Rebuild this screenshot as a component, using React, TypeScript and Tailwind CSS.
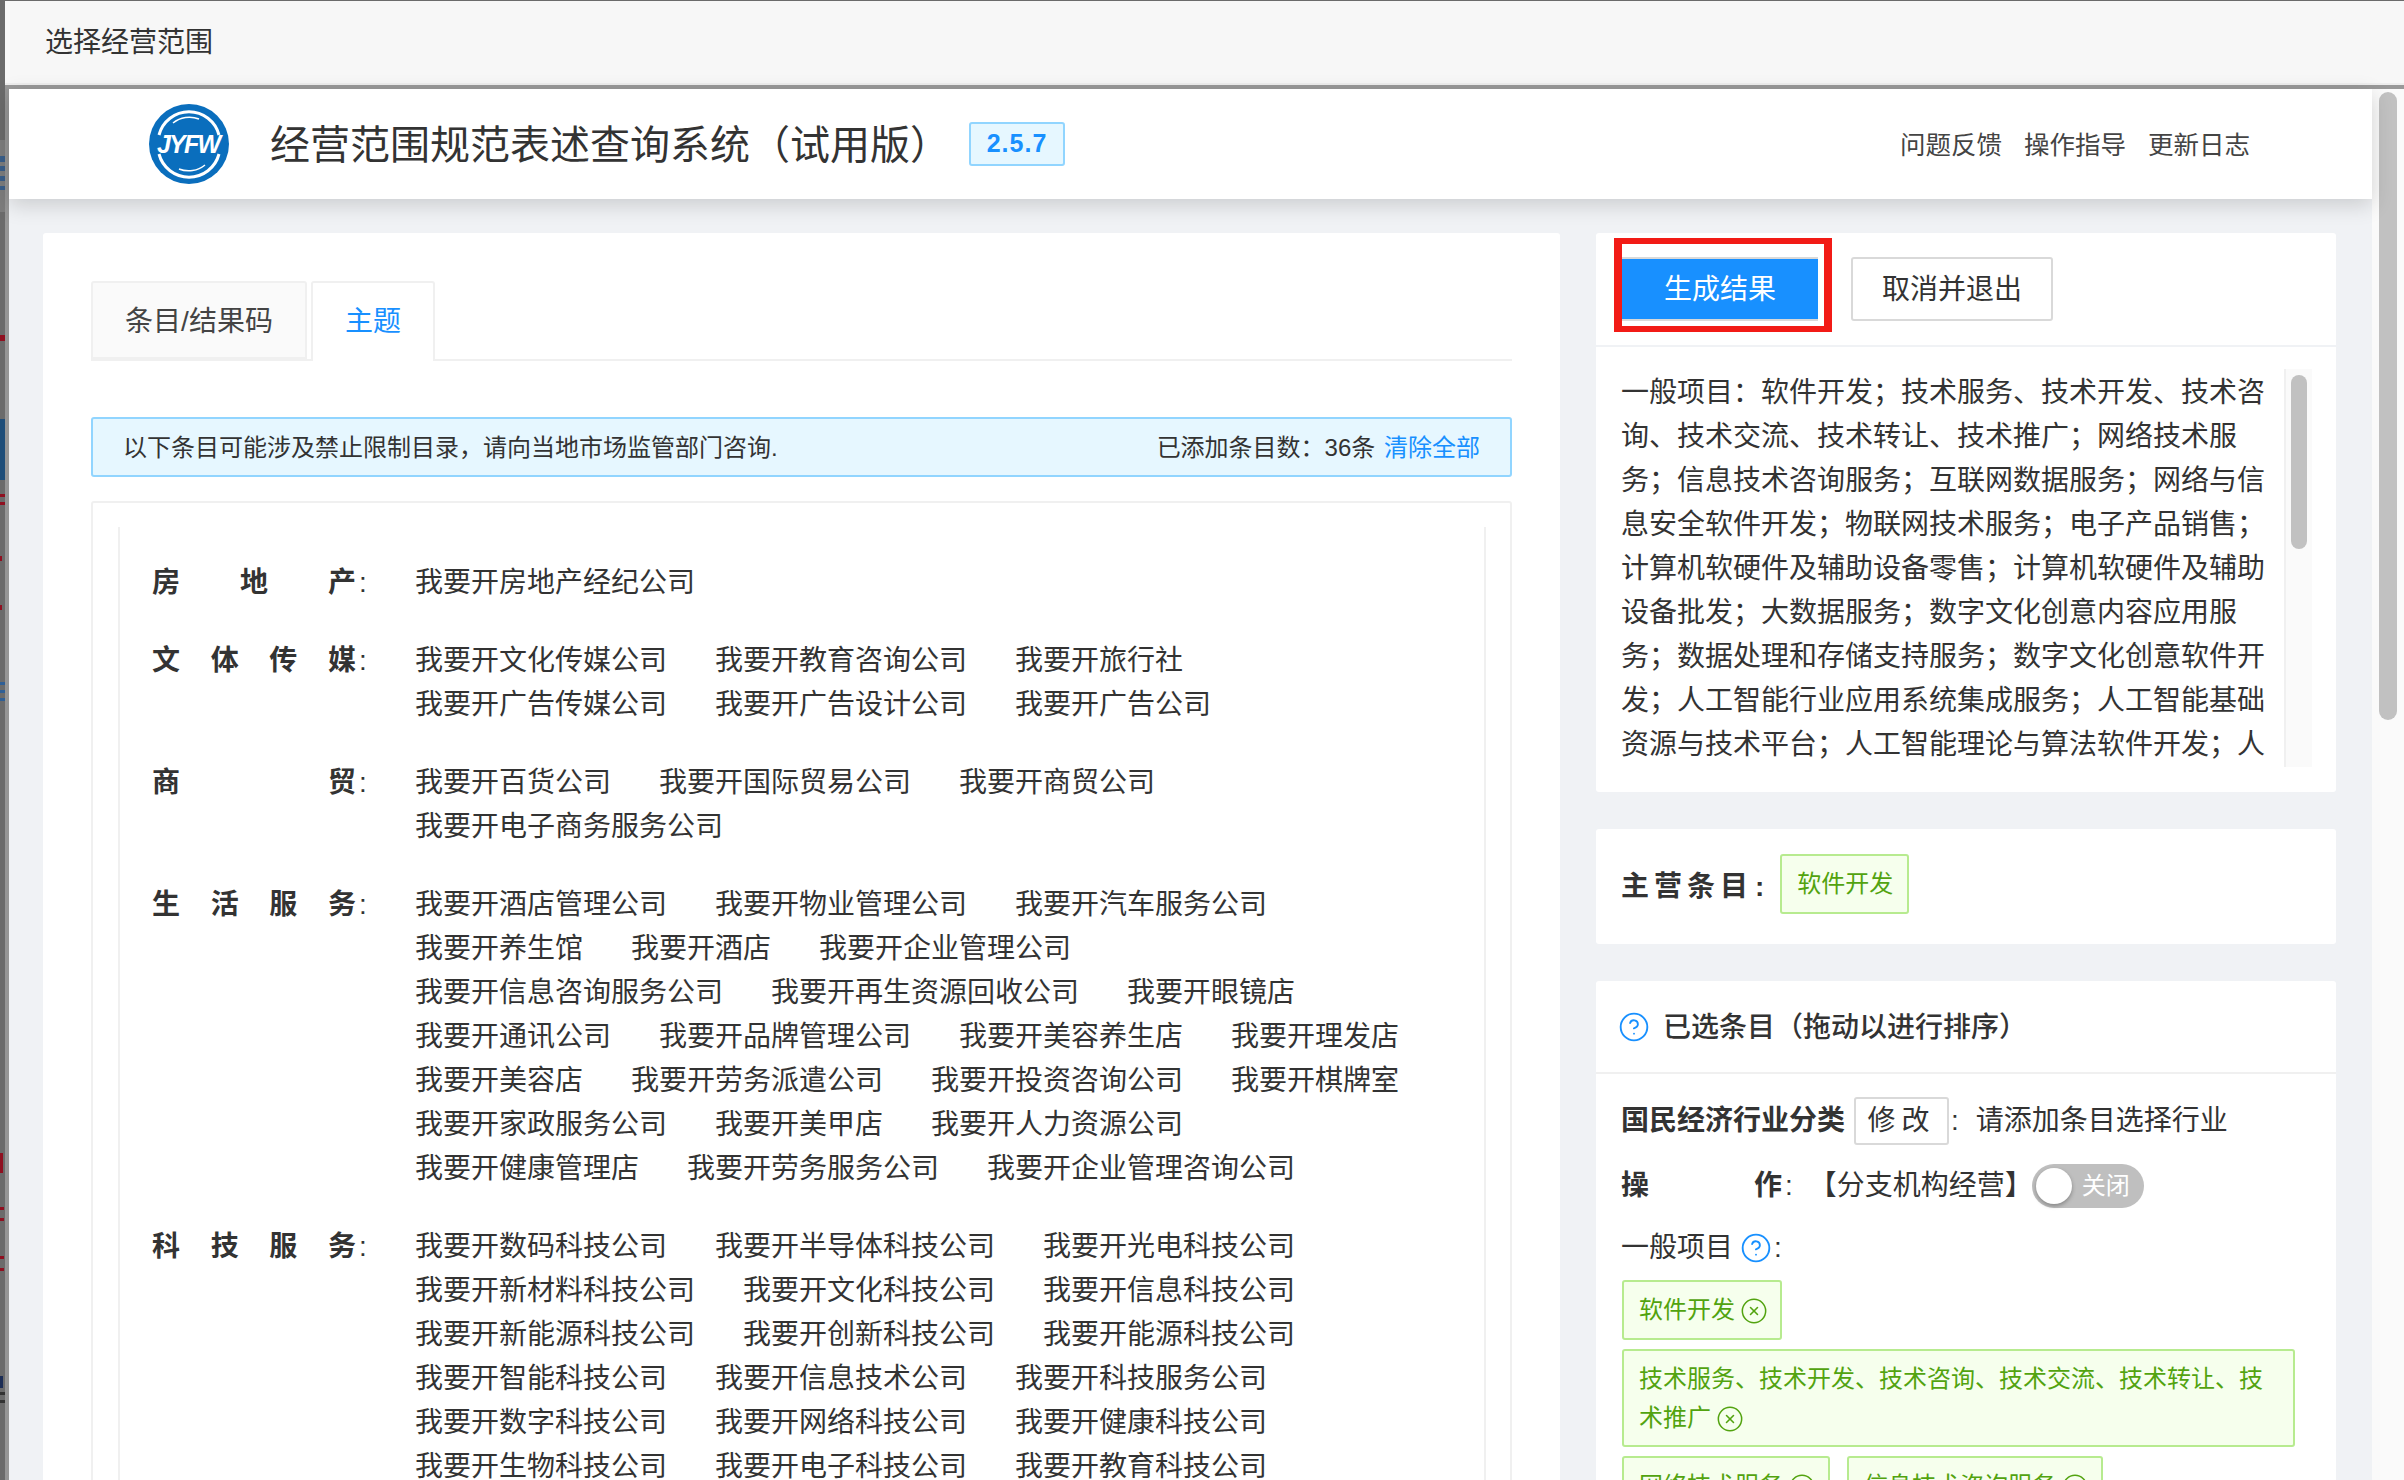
import { CircleHelp, CircleX } from "lucide-react";

const groups: { label: string; lines: string[][] }[] = [
  { label: "房地产", lines: [["房地产经纪公司"]] },
  {
    label: "文体传媒",
    lines: [
      ["文化传媒公司", "教育咨询公司", "旅行社"],
      ["广告传媒公司", "广告设计公司", "广告公司"],
    ],
  },
  {
    label: "商贸",
    lines: [["百货公司", "国际贸易公司", "商贸公司"], ["电子商务服务公司"]],
  },
  {
    label: "生活服务",
    lines: [
      ["酒店管理公司", "物业管理公司", "汽车服务公司"],
      ["养生馆", "酒店", "企业管理公司"],
      ["信息咨询服务公司", "再生资源回收公司", "眼镜店"],
      ["通讯公司", "品牌管理公司", "美容养生店", "理发店"],
      ["美容店", "劳务派遣公司", "投资咨询公司", "棋牌室"],
      ["家政服务公司", "美甲店", "人力资源公司"],
      ["健康管理店", "劳务服务公司", "企业管理咨询公司"],
    ],
  },
  {
    label: "科技服务",
    lines: [
      ["数码科技公司", "半导体科技公司", "光电科技公司"],
      ["新材料科技公司", "文化科技公司", "信息科技公司"],
      ["新能源科技公司", "创新科技公司", "能源科技公司"],
      ["智能科技公司", "信息技术公司", "科技服务公司"],
      ["数字科技公司", "网络科技公司", "健康科技公司"],
      ["生物科技公司", "电子科技公司", "教育科技公司"],
    ],
  },
];

const resultText =
  "一般项目：软件开发；技术服务、技术开发、技术咨询、技术交流、技术转让、技术推广；网络技术服务；信息技术咨询服务；互联网数据服务；网络与信息安全软件开发；物联网技术服务；电子产品销售；计算机软硬件及辅助设备零售；计算机软硬件及辅助设备批发；大数据服务；数字文化创意内容应用服务；数据处理和存储支持服务；数字文化创意软件开发；人工智能行业应用系统集成服务；人工智能基础资源与技术平台；人工智能理论与算法软件开发；人工智能公共数据平台；软件销售；";

// bits of the dimmed page that peek out left of the modal
const specks: { y: number; h: number; w: number; color: string }[] = [
  { y: 140, h: 72, w: 5, color: "#7d7d7d" },
  { y: 156, h: 6, w: 5, color: "#3a5f8a" },
  { y: 166, h: 5, w: 5, color: "#3a5f8a" },
  { y: 176, h: 5, w: 5, color: "#3a5f8a" },
  { y: 186, h: 4, w: 5, color: "#3a5f8a" },
  { y: 335, h: 6, w: 5, color: "#8f1020" },
  { y: 419, h: 61, w: 5, color: "#1f4e79" },
  { y: 494, h: 3, w: 5, color: "#8f1020" },
  { y: 502, h: 3, w: 5, color: "#8f1020" },
  { y: 556, h: 5, w: 2, color: "#8f1020" },
  { y: 605, h: 5, w: 2, color: "#8f1020" },
  { y: 682, h: 3, w: 5, color: "#2f5f95" },
  { y: 690, h: 3, w: 5, color: "#2f5f95" },
  { y: 698, h: 3, w: 5, color: "#2f5f95" },
  { y: 1153, h: 20, w: 3, color: "#8f1020" },
  { y: 1207, h: 3, w: 4, color: "#8f1020" },
  { y: 1218, h: 3, w: 4, color: "#8f1020" },
  { y: 1256, h: 3, w: 4, color: "#8f1020" },
  { y: 1268, h: 3, w: 4, color: "#8f1020" },
  { y: 1376, h: 12, w: 3, color: "#1c2d55" },
  { y: 1392, h: 3, w: 5, color: "#333333" },
  { y: 1400, h: 3, w: 5, color: "#333333" },
];

function Logo() {
  return (
    <svg width="80" height="80" viewBox="0 0 80 80" className="shrink-0">
      <circle cx="40" cy="40" r="40" fill="#0a6ebd" />
      <path d="M10 31 A31 31 0 0 1 70 31" fill="none" stroke="#fff" strokeWidth="3" />
      <path d="M10 50 A31 31 0 0 0 70 50" fill="none" stroke="#fff" strokeWidth="3" />
      <path d="M24 19 A26 26 0 0 1 50 15" fill="none" stroke="#fff" strokeWidth="1.5" />
      <path d="M30 65 A26 26 0 0 0 56 61" fill="none" stroke="#fff" strokeWidth="1.5" />
      <text
        x="40"
        y="49"
        textAnchor="middle"
        fill="#fff"
        fontSize="25"
        fontWeight="700"
        fontStyle="italic"
        fontFamily="Liberation Sans, sans-serif"
        textLength="64"
      >
        JYFW
      </text>
    </svg>
  );
}

function Tag({ text, close = true, leading = "leading-[40px]" }: { text: string; close?: boolean; leading?: string }) {
  return (
    <div className={`w-fit rounded-[3px] border-2 border-[#b7eb8f] bg-[#f6ffed] py-[8px] pl-[15px] pr-[14px] text-[24px] text-[#52a30f] ${leading}`}>
      {text}
      {close && <CircleX size={28} strokeWidth={1.3} className="-mr-[2px] ml-[5px] inline-block align-[-7px]" />}
    </div>
  );
}

function GroupRow({ label, lines }: { label: string; lines: string[][] }) {
  return (
    <div className="mb-[34px] flex text-[28px] leading-[44px] text-[#333]">
      <div className="flex w-[263px] shrink-0">
        <span className="w-[204px] font-semibold [text-align-last:justify]">{label}</span>
        <span className="ml-[3px]">:</span>
      </div>
      <div>
        {lines.map((line, i) => (
          <div key={i} className="flex gap-[48px] whitespace-nowrap">
            {line.map((name) => (
              <span key={name}>我要开{name}</span>
            ))}
          </div>
        ))}
      </div>
    </div>
  );
}

export default function App() {
  return (
    <div
      lang="zh-CN"
      className="relative flex h-[1480px] w-[2404px] flex-col overflow-hidden bg-[#6b6b6b] pl-[5px] pt-[1px] font-['Liberation_Sans','Noto_Sans_CJK_SC',sans-serif] text-[#333]"
    >
      {specks.map((s) => (
        <div
          key={s.y}
          className="absolute left-0"
          style={{ top: s.y, height: s.h, width: s.w, backgroundColor: s.color }}
        />
      ))}

      {/* modal title */}
      <div className="flex h-[84px] shrink-0 items-center border-b-2 border-[#eeeeee] bg-[#f7f7f7] pl-[40px] pt-[2px] text-[28px] text-[#333]">
        选择经营范围
      </div>
      <div className="h-[4px] shrink-0 bg-[#999999]" />

      <div className="flex min-h-0 flex-1 bg-[#969696] pl-[4px]">
        <div className="flex w-[2363px] shrink-0 flex-col bg-[#f0f2f5]">
          {/* app header */}
          <header className="relative flex h-[110px] shrink-0 items-center bg-white pl-[140px] pr-[122px] shadow-[0_6px_20px_rgba(0,0,0,0.16)]">
            <Logo />
            <h1 className="ml-[41px] whitespace-nowrap pt-[2px] text-[40px] font-normal text-[#333]">
              经营范围规范表述查询系统（试用版）
            </h1>
            <span className="ml-[19px] flex h-[44px] w-[96px] items-center justify-center rounded-[3px] border-2 border-[#91d5ff] bg-[#e6f7ff] text-[25px] font-bold tracking-[1px] text-[#1890ff]">
              2.5.7
            </span>
            <nav className="ml-auto flex gap-[22px] pt-[2px] text-[25.5px] text-[#444]">
              <span>问题反馈</span>
              <span>操作指导</span>
              <span>更新日志</span>
            </nav>
          </header>

          <div className="flex min-h-0 flex-1 gap-[36px] pl-[34px] pt-[34px]">
            {/* left card */}
            <section className="w-[1517px] shrink-0 rounded-t-[3px] bg-white px-[48px] pt-[48px]">
              <div className="flex h-[80px] items-start gap-[4px] border-b-2 border-[#f0f0f0] text-[28px]">
                <div className="flex h-[78px] w-[216px] items-center justify-center rounded-t-[3px] border-2 border-[#f0f0f0] bg-[#fafafa] pt-[3px] text-[#444]">
                  条目/结果码
                </div>
                <div className="flex h-[80px] w-[124px] items-center justify-center rounded-t-[3px] border-2 border-b-0 border-[#f0f0f0] bg-white text-[#1890ff]">
                  主题
                </div>
              </div>

              <div className="mt-[56px] flex h-[60px] w-[1421px] items-center justify-between rounded-[3px] border-2 border-[#91d5ff] bg-[#e6f7ff] pl-[30px] pr-[30px] pt-[2px] text-[24px] text-[#333]">
                <span>以下条目可能涉及禁止限制目录，请向当地市场监管部门咨询.</span>
                <span>
                  已添加条目数：36条 <span className="ml-[2px] text-[#1890ff]">清除全部</span>
                </span>
              </div>

              <div className="mt-[24px] h-[1000px] w-[1421px] rounded-[3px] border-2 border-[#f0f0f0] pl-[25px] pr-[24px] pt-[24px]">
                <div className="h-full border-x-2 border-[#f0f0f0] pl-[32px] pt-[34px]">
                  {groups.map((g) => (
                    <GroupRow key={g.label} label={g.label} lines={g.lines} />
                  ))}
                </div>
              </div>
            </section>

            {/* right column */}
            <aside className="flex w-[740px] shrink-0 flex-col gap-[37px]">
              <div className="rounded-[3px] bg-white">
                <div className="relative flex h-[112px] gap-[33px] pl-[26px] pt-[24px]">
                  <button className="h-[64px] w-[196px] border-y-2 border-[#d9d9d9] bg-[#1890ff] pt-[2px] text-[28px] text-white">
                    生成结果
                  </button>
                  <button className="h-[64px] w-[202px] rounded-[3px] border-2 border-[#d9d9d9] bg-white pt-[2px] text-[28px] text-[#333]">
                    取消并退出
                  </button>
                  {/* red annotation box */}
                  <div className="absolute left-[18px] top-[5px] h-[94px] w-[218px] border-x-[8px] border-y-[6px] border-[#f21b16]" />
                </div>
                <div className="h-[2px] bg-[#f0f2f5]" />
                <div className="flex h-[445px] items-start pl-[25px] pt-[22px]">
                  <p className="mt-[2px] h-[396px] w-[650px] overflow-hidden text-[28px] leading-[44px] text-[#333]">
                    {resultText}
                  </p>
                  <div className="ml-[13px] h-[398px] w-[28px] border-l-2 border-[#f0f0f0] bg-[#fafafa] pl-[5px] pt-[6px]">
                    <div className="h-[174px] w-[16px] rounded-full bg-[#c1c1c1]" />
                  </div>
                </div>
              </div>

              <div className="flex h-[115px] shrink-0 items-center rounded-[3px] bg-white pl-[25px]">
                <span className="text-[28px] font-semibold tracking-[5px]">主营条目</span>
                <span className="ml-[2px] text-[28px] font-semibold">:</span>
                <div className="mb-[5px] ml-[16px]">
                  <Tag text="软件开发" close={false} />
                </div>
              </div>

              <div className="flex-1 rounded-t-[3px] bg-white">
                <div className="flex h-[93px] items-center gap-[13px] border-b-2 border-[#f0f0f0] pl-[22px] text-[28px] font-medium">
                  <CircleHelp size={32} strokeWidth={1.4} className="text-[#1890ff]" />
                  <span className="pt-[2px]">已选条目（拖动以进行排序）</span>
                </div>
                <div className="pl-[25px] text-[28px] leading-[44px]">
                  <div className="mt-[23px] flex h-[48px] items-center">
                    <span className="font-semibold">国民经济行业分类</span>
                    <span className="ml-[9px] flex h-[48px] w-[95px] items-center justify-center rounded-[3px] border-2 border-[#d9d9d9] tracking-[6px]">
                      修改
                    </span>
                    <span className="ml-[2px]">:</span>
                    <span className="ml-[17px]">请添加条目选择行业</span>
                  </div>
                  <div className="mt-[19px] flex h-[44px] items-center">
                    <span className="w-[161px] font-semibold [text-align-last:justify]">操作</span>
                    <span className="ml-[3px]">:</span>
                    <span className="ml-[16px]">【分支机构经营】</span>
                    <span className="-ml-[1px] flex h-[44px] w-[112px] items-center rounded-full bg-[#bfbfbf] pl-[4px] text-[24px] text-white">
                      <span className="h-[36px] w-[36px] rounded-full bg-white shadow-[0_2px_4px_rgba(0,0,0,0.3)]" />
                      <span className="ml-[10px]">关闭</span>
                    </span>
                  </div>
                  <div className="mt-[18px] flex h-[44px] items-center">
                    一般项目
                    <CircleHelp size={32} strokeWidth={1.4} className="ml-[7px] text-[#1890ff]" />
                    <span className="ml-[2px]">:</span>
                  </div>
                  <div className="ml-[1px] mt-[10px] flex w-[673px] flex-col gap-[9px]">
                    <Tag text="软件开发" />
                    <div className="w-[673px]">
                      <Tag text="技术服务、技术开发、技术咨询、技术交流、技术转让、技术推广" leading="leading-[39px]" />
                    </div>
                    <div className="flex gap-[17px]">
                      <Tag text="网络技术服务" />
                      <Tag text="信息技术咨询服务" />
                    </div>
                  </div>
                </div>
              </div>
            </aside>
          </div>
        </div>

        {/* page scrollbar */}
        <div className="flex-1 bg-[#fafafa] pl-[7px] pt-[3px]">
          <div className="h-[628px] w-[18px] rounded-full bg-[#c1c1c1]" />
        </div>
      </div>
    </div>
  );
}
